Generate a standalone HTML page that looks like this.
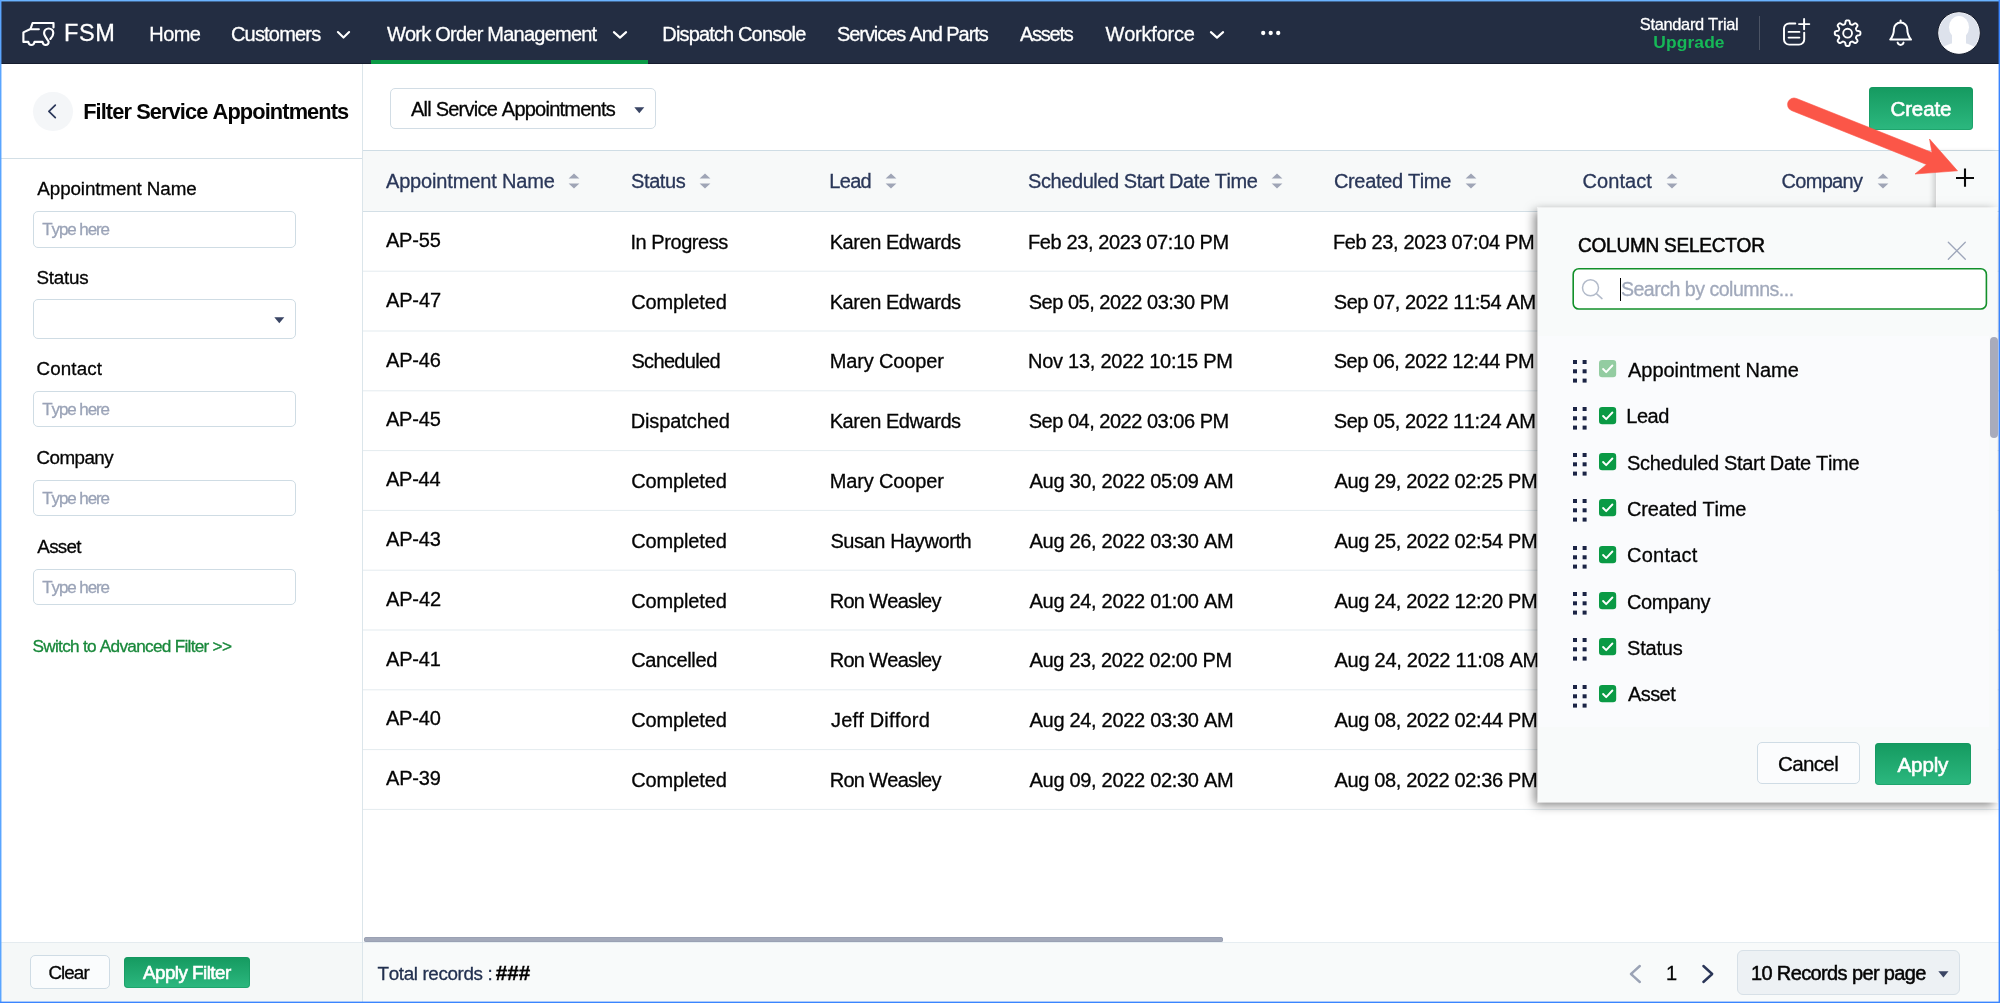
<!DOCTYPE html>
<html lang="en">
<head>
<meta charset="utf-8">
<title>FSM - Service Appointments</title>
<style>
html,body{margin:0;padding:0;overflow:hidden;}
body{width:2000px;height:1003px;overflow:hidden;position:relative;background:#fff;
  font-family:"Liberation Sans",sans-serif;font-kerning:none;-webkit-font-smoothing:antialiased;}
.abs{position:absolute;}
.tl{will-change:transform;}
.t{position:absolute;white-space:pre;line-height:1;font-kerning:none;}
svg{display:block;overflow:visible;}
/* top navigation */
#nav{position:absolute;left:0;top:0;width:2000px;height:64px;background:#232d42;box-shadow:inset 0 -1px 0 #161d2e;}
#nav .active{position:absolute;left:371px;top:59.5px;width:277px;height:4.5px;background:#0a9a45;}
#nav .sep{position:absolute;left:1759px;top:16px;width:1px;height:34px;background:#4b5364;}
/* sidebar */
#side{position:absolute;left:0;top:64px;width:362px;height:939px;background:#fff;border-right:1px solid #dbe5ea;}
#side .hline{position:absolute;left:0;top:94px;width:362px;height:1px;background:#d3dfe6;}
.back{position:absolute;left:33px;top:27.5px;width:39.5px;height:39.5px;border-radius:50%;background:#f4f6f8;}
.inp{position:absolute;left:33px;width:261px;border:1px solid #cfdce4;border-radius:5px;background:#fff;}
#side .foot{position:absolute;left:0;top:878px;width:362px;height:61px;background:#f5f8f8;border-top:1px solid #e4ebef;box-sizing:border-box;}
.btn-w{position:absolute;border:1px solid #cfdce5;border-radius:5px;background:#fafcfd;box-sizing:border-box;}
.btn-g{position:absolute;border-radius:4px;background:linear-gradient(#159a60,#2cb87f);box-shadow:inset 0 0 0 1px rgba(20,150,95,.55);box-sizing:border-box;}
/* main */
#main{position:absolute;left:363px;top:64px;width:1637px;height:939px;background:#fff;}
#thead{position:absolute;left:0;top:86px;width:1637px;height:62px;background:#f7f9f9;border-top:1px solid #cfdde5;border-bottom:1px solid #d3dfe6;box-sizing:border-box;}
#viewsel{position:absolute;left:390px;top:88px;width:265.5px;height:40.5px;border:1px solid #d2dde5;border-radius:5px;box-sizing:border-box;background:#fff;}
#pluscell{position:absolute;left:1937px;top:151px;width:63px;height:60px;background:#f8fafa;box-shadow:-1px 0 0 #fbfbfb,-5px 0 5px -1px rgba(0,0,0,.16);}
#hscroll{position:absolute;left:363.5px;top:937px;width:859.5px;height:5px;border-radius:2.5px;background:#a3a9ba;box-shadow:inset 0 0 0 .5px #9299ac;}
#mfoot{position:absolute;left:363px;top:942px;width:1637px;height:61px;background:#f8fafa;border-top:1px solid #e6edf1;box-sizing:border-box;}
#ppsel{position:absolute;left:1737px;top:950.4px;width:223px;height:44.4px;background:#edf1f4;border:1px solid #d7e0e7;border-radius:6px;box-sizing:border-box;}
/* column selector */
#panel{position:absolute;left:1538.4px;top:207.6px;width:458.6px;height:594.8px;background:#f8fafa;box-shadow:0 0 0 1px rgba(255,255,255,.55),-3px 3px 10px rgba(0,0,0,.5);}
#plist{position:absolute;left:1538.4px;top:336px;width:450.6px;height:391.4px;background:#fafbfd;}
#pscroll{position:absolute;left:1990px;top:337px;width:8px;height:101px;border-radius:4px;background:#a8abbb;}
/* frame */
.fr{position:absolute;z-index:50;}
</style>
</head>
<body>

<header id="nav">
  <div class="active"></div>
  <svg class="abs" style="left:0;top:0" width="2000" height="64" viewBox="0 0 2000 64" fill="none" stroke="#fff" stroke-linecap="round" stroke-linejoin="round">
    <!-- truck logo -->
    <g stroke-width="2.15">
      <path d="M53.5 27.4 V23 H32.6 L30.5 29 L23.4 32.4 V41.9 H28.3 C28.6 43.9 29.8 45 31.4 45 C33 45 34.2 43.9 34.5 41.9 H42.5 C42.8 43.9 44.1 45 45.7 45 C47.6 45 48.9 43.5 48.6 41.7 C48.3 40.2 44.1 36.6 44.1 33.1 A4.6 4.6 0 1 1 53.3 33.1 C53.3 35.4 51.9 37.5 50.4 38.9"/>
      <path d="M31 29.2 H38.8"/>
    </g>
    <!-- more dots -->
    <g fill="#fff" stroke="none"><circle cx="1263.2" cy="33" r="2.15"/><circle cx="1270.7" cy="33" r="2.15"/><circle cx="1278.2" cy="33" r="2.15"/></g>
    <!-- note + -->
    <g stroke-width="1.95" transform="translate(0 0.6)">
      <path d="M1795.3 22.8 H1789.2 A5.2 5.2 0 0 0 1784 28 V38.8 A5.2 5.2 0 0 0 1789.2 44 H1799 A5.2 5.2 0 0 0 1804.2 38.8 V32"/>
      <path d="M1788.6 31.3 H1799.4 M1788.6 37 H1799.4"/>
      <path d="M1799 23.5 H1809.3 M1804.1 18.4 V28.6"/>
    </g>
    <!-- gear -->
    <path d="M1847.60 20.35 L1848.10 20.37 L1848.60 20.45 L1849.09 20.65 L1849.50 21.19 L1849.77 22.31 L1849.94 23.44 L1850.19 24.00 L1850.51 24.25 L1850.84 24.42 L1851.18 24.56 L1851.52 24.70 L1851.87 24.82 L1852.27 24.86 L1852.85 24.64 L1853.77 23.97 L1854.75 23.36 L1855.43 23.27 L1855.91 23.47 L1856.32 23.77 L1856.69 24.11 L1857.03 24.48 L1857.33 24.89 L1857.53 25.37 L1857.44 26.05 L1856.83 27.03 L1856.16 27.95 L1855.94 28.53 L1855.98 28.93 L1856.10 29.28 L1856.24 29.62 L1856.38 29.96 L1856.55 30.29 L1856.80 30.61 L1857.36 30.86 L1858.49 31.03 L1859.61 31.30 L1860.15 31.71 L1860.35 32.20 L1860.43 32.70 L1860.45 33.20 L1860.43 33.70 L1860.35 34.20 L1860.15 34.69 L1859.61 35.10 L1858.49 35.37 L1857.36 35.54 L1856.80 35.79 L1856.55 36.11 L1856.38 36.44 L1856.24 36.78 L1856.10 37.12 L1855.98 37.47 L1855.94 37.87 L1856.16 38.45 L1856.83 39.37 L1857.44 40.35 L1857.53 41.03 L1857.33 41.51 L1857.03 41.92 L1856.69 42.29 L1856.32 42.63 L1855.91 42.93 L1855.43 43.13 L1854.75 43.04 L1853.77 42.43 L1852.85 41.76 L1852.27 41.54 L1851.87 41.58 L1851.52 41.70 L1851.18 41.84 L1850.84 41.98 L1850.51 42.15 L1850.19 42.40 L1849.94 42.96 L1849.77 44.09 L1849.50 45.21 L1849.09 45.75 L1848.60 45.95 L1848.10 46.03 L1847.60 46.05 L1847.10 46.03 L1846.60 45.95 L1846.11 45.75 L1845.70 45.21 L1845.43 44.09 L1845.26 42.96 L1845.01 42.40 L1844.69 42.15 L1844.36 41.98 L1844.02 41.84 L1843.68 41.70 L1843.33 41.58 L1842.93 41.54 L1842.35 41.76 L1841.43 42.43 L1840.45 43.04 L1839.77 43.13 L1839.29 42.93 L1838.88 42.63 L1838.51 42.29 L1838.17 41.92 L1837.87 41.51 L1837.67 41.03 L1837.76 40.35 L1838.37 39.37 L1839.04 38.45 L1839.26 37.87 L1839.22 37.47 L1839.10 37.12 L1838.96 36.78 L1838.82 36.44 L1838.65 36.11 L1838.40 35.79 L1837.84 35.54 L1836.71 35.37 L1835.59 35.10 L1835.05 34.69 L1834.85 34.20 L1834.77 33.70 L1834.75 33.20 L1834.77 32.70 L1834.85 32.20 L1835.05 31.71 L1835.59 31.30 L1836.71 31.03 L1837.84 30.86 L1838.40 30.61 L1838.65 30.29 L1838.82 29.96 L1838.96 29.62 L1839.10 29.28 L1839.22 28.93 L1839.26 28.53 L1839.04 27.95 L1838.37 27.03 L1837.76 26.05 L1837.67 25.37 L1837.87 24.89 L1838.17 24.48 L1838.51 24.11 L1838.88 23.77 L1839.29 23.47 L1839.77 23.27 L1840.45 23.36 L1841.43 23.97 L1842.35 24.64 L1842.93 24.86 L1843.33 24.82 L1843.68 24.70 L1844.02 24.56 L1844.36 24.42 L1844.69 24.25 L1845.01 24.00 L1845.26 23.44 L1845.43 22.31 L1845.70 21.19 L1846.11 20.65 L1846.60 20.45 L1847.10 20.37 Z" stroke-width="1.9"/>
    <circle cx="1847.6" cy="33.2" r="4.4" stroke-width="1.9"/>
    <!-- bell -->
    <g stroke-width="2">
      <path d="M1890.2 39.6 C1892.6 36.6 1893.9 34.2 1893.9 29.2 A6.7 6.7 0 0 1 1907.3 29.2 C1907.3 34.2 1908.6 36.6 1911 39.6 Z"/>
      <path d="M1900.6 20.4 V22.3"/>
      <path d="M1897.6 42.6 A3.1 3.1 0 0 0 1903.6 42.6"/>
    </g>
  </svg>
  <div class="sep"></div>
  <!-- avatar -->
  <svg class="abs" style="left:1937px;top:11px" width="44" height="44" viewBox="0 0 44 44">
    <defs><clipPath id="av"><circle cx="22" cy="22" r="20.2"/></clipPath></defs>
    <circle cx="22" cy="22" r="21.3" fill="#f4f5f8" stroke="#151c2c" stroke-width="1"/>
    <circle cx="22" cy="22" r="20.2" fill="#dde2ec"/>
    <g clip-path="url(#av)" fill="#fff">
      <ellipse cx="22" cy="16.3" rx="10" ry="11.4"/>
      <rect x="15" y="22" width="14" height="11"/>
      <ellipse cx="22" cy="47" rx="22" ry="15.5"/>
    </g>
  </svg>
</header>
<div class="abs tl" style="left:0;top:0;width:2000px;height:64px">
<span class="t" style="left:64.07px;top:21.71px;font-size:23.5px;letter-spacing:0.625px;color:#fff;-webkit-text-stroke:0.3px #fff;">FSM</span>
<span class="t" style="left:149.36px;top:23.67px;font-size:20px;letter-spacing:-0.607px;color:#fff;-webkit-text-stroke:0.3px #fff;">Home</span>
<span class="t" style="left:230.98px;top:23.67px;font-size:20px;letter-spacing:-0.806px;color:#fff;-webkit-text-stroke:0.3px #fff;">Customers</span>
<span class="t" style="left:386.91px;top:23.67px;font-size:20px;letter-spacing:-0.770px;color:#fff;-webkit-text-stroke:0.3px #fff;">Work Order Management</span>
<span class="t" style="left:662.36px;top:23.67px;font-size:20px;letter-spacing:-0.855px;color:#fff;-webkit-text-stroke:0.3px #fff;">Dispatch Console</span>
<span class="t" style="left:837.09px;top:23.67px;font-size:20px;letter-spacing:-1.085px;color:#fff;-webkit-text-stroke:0.3px #fff;">Services And Parts</span>
<span class="t" style="left:1019.96px;top:23.67px;font-size:20px;letter-spacing:-1.252px;color:#fff;-webkit-text-stroke:0.3px #fff;">Assets</span>
<span class="t" style="left:1105.51px;top:23.67px;font-size:20px;letter-spacing:-0.218px;color:#fff;-webkit-text-stroke:0.3px #fff;">Workforce</span>
<svg class="abs" style="left:336.0px;top:29px" width="15.0" height="12" viewBox="0 0 15.0 12"><path d="M1.9 3.1 L7.50 8.6 L13.10 3.1" fill="none" stroke="#fff" stroke-width="2.1" stroke-linecap="round" stroke-linejoin="round"/></svg>
<svg class="abs" style="left:612.0px;top:29px" width="16.0" height="12" viewBox="0 0 16.0 12"><path d="M1.9 3.1 L8.00 8.6 L14.10 3.1" fill="none" stroke="#fff" stroke-width="2.1" stroke-linecap="round" stroke-linejoin="round"/></svg>
<svg class="abs" style="left:1208.6px;top:29px" width="16.0" height="12" viewBox="0 0 16.0 12"><path d="M1.9 3.1 L8.00 8.6 L14.10 3.1" fill="none" stroke="#fff" stroke-width="2.1" stroke-linecap="round" stroke-linejoin="round"/></svg>
<span class="t" style="left:1639.86px;top:15.72px;font-size:16.4px;letter-spacing:-0.320px;color:#fff;-webkit-text-stroke:0.3px #fff;">Standard Trial</span>
<span class="t" style="left:1653.35px;top:33.87px;font-size:17.4px;letter-spacing:0.110px;color:#16b857;font-weight:700;">Upgrade</span>
</div>

<aside id="side">
  <div class="back"></div>
  <svg class="abs" style="left:46px;top:39px" width="13" height="17" viewBox="0 0 13 17"><path d="M9.3 2.1 L2.9 8.4 L9.3 14.7" fill="none" stroke="#2a3759" stroke-width="1.7" stroke-linecap="round" stroke-linejoin="round"/></svg>
  <div class="hline"></div>
  <div class="inp" style="top:147px;height:34.6px"></div>
  <div class="inp" style="top:235.4px;height:37.2px"></div>
  <svg class="abs" style="left:273.6px;top:253px" width="10.6" height="6.6" viewBox="0 0 10.6 6.6"><path d="M0.3 0.2 H10.3 L5.3 6.3 Z" fill="#3a4564"/></svg>
  <div class="inp" style="top:327.4px;height:34px"></div>
  <div class="inp" style="top:416.4px;height:34px"></div>
  <div class="inp" style="top:505px;height:34px"></div>
  <div class="foot"></div>
  <div class="btn-w" style="left:29.6px;top:891.4px;width:80px;height:34px"></div>
  <div class="btn-g" style="left:124.4px;top:892.6px;width:125.2px;height:31.4px"></div>
</aside>
<div class="abs tl" style="left:0;top:0;width:362px;height:1003px">
<span class="t" style="left:83.14px;top:100.55px;font-size:21.8px;letter-spacing:-0.899px;color:#050505;font-weight:700;">Filter Service Appointments</span>
<span class="t" style="left:37.36px;top:179.89px;font-size:18.8px;letter-spacing:-0.097px;color:#050505;-webkit-text-stroke:0.3px #050505;">Appointment Name</span>
<span class="t" style="left:36.55px;top:268.89px;font-size:18.8px;letter-spacing:-0.233px;color:#050505;-webkit-text-stroke:0.3px #050505;">Status</span>
<span class="t" style="left:36.45px;top:360.49px;font-size:18.8px;letter-spacing:0.150px;color:#050505;-webkit-text-stroke:0.3px #050505;">Contact</span>
<span class="t" style="left:36.45px;top:449.19px;font-size:18.8px;letter-spacing:-0.528px;color:#050505;-webkit-text-stroke:0.3px #050505;">Company</span>
<span class="t" style="left:37.36px;top:537.99px;font-size:18.8px;letter-spacing:-0.711px;color:#050505;-webkit-text-stroke:0.3px #050505;">Asset</span>
<span class="t" style="left:42.22px;top:220.81px;font-size:17px;letter-spacing:-1.088px;color:#9aa3b7;-webkit-text-stroke:0.3px #9aa3b7;">Type here</span>
<span class="t" style="left:42.22px;top:401.41px;font-size:17px;letter-spacing:-1.088px;color:#9aa3b7;-webkit-text-stroke:0.3px #9aa3b7;">Type here</span>
<span class="t" style="left:42.22px;top:490.41px;font-size:17px;letter-spacing:-1.088px;color:#9aa3b7;-webkit-text-stroke:0.3px #9aa3b7;">Type here</span>
<span class="t" style="left:42.22px;top:579.01px;font-size:17px;letter-spacing:-1.088px;color:#9aa3b7;-webkit-text-stroke:0.3px #9aa3b7;">Type here</span>
<span class="t" style="left:32.52px;top:638.04px;font-size:17.2px;letter-spacing:-0.715px;color:#18883a;-webkit-text-stroke:0.3px #18883a;">Switch to Advanced Filter &gt;&gt;</span>
<span class="t" style="left:48.45px;top:963.89px;font-size:18.8px;letter-spacing:-0.915px;color:#050505;-webkit-text-stroke:0.3px #050505;">Clear</span>
<span class="t" style="left:142.96px;top:963.89px;font-size:18.8px;letter-spacing:-0.516px;color:#fff;-webkit-text-stroke:0.6px #fff;">Apply Filter</span>
</div>

<main id="main">
  <div id="thead"></div>
</main>
<div id="viewsel"></div>
<svg class="abs" style="left:634px;top:106.6px" width="10.6" height="6.6" viewBox="0 0 10.6 6.6"><path d="M0.3 0.2 H10.3 L5.3 6.3 Z" fill="#3a4564"/></svg>
<div class="btn-g" style="left:1869px;top:87.4px;width:104.2px;height:42.2px"></div>
<svg class="abs" style="left:363px;top:0" width="1637" height="1003" viewBox="0 0 1637 1003" fill="#e4ebef"><rect x="0" y="270.70" width="1637" height="1"/><rect x="0" y="330.50" width="1637" height="1"/><rect x="0" y="390.30" width="1637" height="1"/><rect x="0" y="450.10" width="1637" height="1"/><rect x="0" y="509.90" width="1637" height="1"/><rect x="0" y="569.70" width="1637" height="1"/><rect x="0" y="629.50" width="1637" height="1"/><rect x="0" y="689.30" width="1637" height="1"/><rect x="0" y="749.10" width="1637" height="1"/><rect x="0" y="808.90" width="1637" height="1"/></svg>
<div id="pluscell"></div>
<svg class="abs" style="left:1955px;top:168px" width="20" height="20" viewBox="0 0 20 20"><path d="M1 10 H19 M10 0.6 V18.8" stroke="#0a0a0a" stroke-width="2.1" fill="none"/></svg>
<div id="hscroll"></div>
<div id="mfoot"></div>
<div id="ppsel"></div>
<svg class="abs" style="left:1937.6px;top:970.6px" width="10.8" height="6.8" viewBox="0 0 10.8 6.8"><path d="M0.3 0.2 H10.5 L5.4 6.5 Z" fill="#3a4564"/></svg>
<svg class="abs" style="left:1628px;top:963px" width="90" height="22" viewBox="0 0 90 22" fill="none" stroke-width="2.4" stroke-linecap="round" stroke-linejoin="round">
  <path d="M11.8 3 L3 11 L11.8 19" stroke="#9ba3b5"/>
  <path d="M75.4 3 L84.2 11 L75.4 19" stroke="#2a3557"/>
</svg>
<div class="abs tl" style="left:0;top:0;width:2000px;height:1003px">
<span class="t" style="left:410.96px;top:98.87px;font-size:20px;letter-spacing:-0.764px;color:#050505;-webkit-text-stroke:0.3px #050505;">All Service Appointments</span>
<span class="t" style="left:1890.46px;top:99.15px;font-size:20.5px;letter-spacing:-0.116px;color:#fff;-webkit-text-stroke:0.6px #fff;">Create</span>
<span class="t" style="left:385.96px;top:171.07px;font-size:20px;letter-spacing:-0.152px;color:#2a3759;-webkit-text-stroke:0.3px #2a3759;">Appointment Name</span>
<svg class="abs" style="left:568.0px;top:173px" width="12" height="16" viewBox="0 0 12 16"><path d="M6 0.6 L11.4 5.6 H0.6 Z M6 15.4 L11.4 10.4 H0.6 Z" fill="#9fa5b6"/></svg>
<span class="t" style="left:631.09px;top:171.07px;font-size:20px;letter-spacing:-0.414px;color:#2a3759;-webkit-text-stroke:0.3px #2a3759;">Status</span>
<svg class="abs" style="left:699.1px;top:173px" width="12" height="16" viewBox="0 0 12 16"><path d="M6 0.6 L11.4 5.6 H0.6 Z M6 15.4 L11.4 10.4 H0.6 Z" fill="#9fa5b6"/></svg>
<span class="t" style="left:829.36px;top:171.07px;font-size:20px;letter-spacing:-0.721px;color:#2a3759;-webkit-text-stroke:0.3px #2a3759;">Lead</span>
<svg class="abs" style="left:884.5px;top:173px" width="12" height="16" viewBox="0 0 12 16"><path d="M6 0.6 L11.4 5.6 H0.6 Z M6 15.4 L11.4 10.4 H0.6 Z" fill="#9fa5b6"/></svg>
<span class="t" style="left:1028.09px;top:171.07px;font-size:20px;letter-spacing:-0.430px;color:#2a3759;-webkit-text-stroke:0.3px #2a3759;">Scheduled Start Date Time</span>
<svg class="abs" style="left:1270.7px;top:173px" width="12" height="16" viewBox="0 0 12 16"><path d="M6 0.6 L11.4 5.6 H0.6 Z M6 15.4 L11.4 10.4 H0.6 Z" fill="#9fa5b6"/></svg>
<span class="t" style="left:1333.98px;top:171.07px;font-size:20px;letter-spacing:-0.350px;color:#2a3759;-webkit-text-stroke:0.3px #2a3759;">Created Time</span>
<svg class="abs" style="left:1464.7px;top:173px" width="12" height="16" viewBox="0 0 12 16"><path d="M6 0.6 L11.4 5.6 H0.6 Z M6 15.4 L11.4 10.4 H0.6 Z" fill="#9fa5b6"/></svg>
<span class="t" style="left:1582.58px;top:171.07px;font-size:20px;letter-spacing:0.039px;color:#2a3759;-webkit-text-stroke:0.3px #2a3759;">Contact</span>
<svg class="abs" style="left:1665.5px;top:173px" width="12" height="16" viewBox="0 0 12 16"><path d="M6 0.6 L11.4 5.6 H0.6 Z M6 15.4 L11.4 10.4 H0.6 Z" fill="#9fa5b6"/></svg>
<span class="t" style="left:1781.38px;top:171.07px;font-size:20px;letter-spacing:-0.657px;color:#2a3759;-webkit-text-stroke:0.3px #2a3759;">Company</span>
<svg class="abs" style="left:1877.0px;top:173px" width="12" height="16" viewBox="0 0 12 16"><path d="M6 0.6 L11.4 5.6 H0.6 Z M6 15.4 L11.4 10.4 H0.6 Z" fill="#9fa5b6"/></svg>
<span class="t" style="left:385.96px;top:229.97px;font-size:20px;letter-spacing:-0.177px;color:#050505;-webkit-text-stroke:0.3px #050505;">AP-55</span>
<span class="t" style="left:630.45px;top:231.77px;font-size:20px;letter-spacing:-0.440px;color:#050505;-webkit-text-stroke:0.3px #050505;">In Progress</span>
<span class="t" style="left:829.66px;top:231.77px;font-size:20px;letter-spacing:-0.440px;color:#050505;-webkit-text-stroke:0.3px #050505;">Karen Edwards</span>
<span class="t" style="left:1027.96px;top:231.77px;font-size:20px;letter-spacing:-0.388px;color:#050505;-webkit-text-stroke:0.3px #050505;">Feb 23, 2023 07:10 PM</span>
<span class="t" style="left:1332.96px;top:231.77px;font-size:20px;letter-spacing:-0.368px;color:#050505;-webkit-text-stroke:0.3px #050505;">Feb 23, 2023 07:04 PM</span>
<span class="t" style="left:385.96px;top:289.77px;font-size:20px;letter-spacing:-0.135px;color:#050505;-webkit-text-stroke:0.3px #050505;">AP-47</span>
<span class="t" style="left:631.28px;top:291.57px;font-size:20px;letter-spacing:-0.139px;color:#050505;-webkit-text-stroke:0.3px #050505;">Completed</span>
<span class="t" style="left:829.66px;top:291.57px;font-size:20px;letter-spacing:-0.440px;color:#050505;-webkit-text-stroke:0.3px #050505;">Karen Edwards</span>
<span class="t" style="left:1028.69px;top:291.57px;font-size:20px;letter-spacing:-0.480px;color:#050505;-webkit-text-stroke:0.3px #050505;">Sep 05, 2022 03:30 PM</span>
<span class="t" style="left:1333.69px;top:291.57px;font-size:20px;letter-spacing:-0.390px;color:#050505;-webkit-text-stroke:0.3px #050505;">Sep 07, 2022 11:54 AM</span>
<span class="t" style="left:385.96px;top:349.57px;font-size:20px;letter-spacing:-0.167px;color:#050505;-webkit-text-stroke:0.3px #050505;">AP-46</span>
<span class="t" style="left:631.39px;top:351.37px;font-size:20px;letter-spacing:-0.653px;color:#050505;-webkit-text-stroke:0.3px #050505;">Scheduled</span>
<span class="t" style="left:829.66px;top:351.37px;font-size:20px;letter-spacing:-0.132px;color:#050505;-webkit-text-stroke:0.3px #050505;">Mary Cooper</span>
<span class="t" style="left:1027.96px;top:351.37px;font-size:20px;letter-spacing:-0.253px;color:#050505;-webkit-text-stroke:0.3px #050505;">Nov 13, 2022 10:15 PM</span>
<span class="t" style="left:1333.69px;top:351.37px;font-size:20px;letter-spacing:-0.460px;color:#050505;-webkit-text-stroke:0.3px #050505;">Sep 06, 2022 12:44 PM</span>
<span class="t" style="left:385.96px;top:409.37px;font-size:20px;letter-spacing:-0.177px;color:#050505;-webkit-text-stroke:0.3px #050505;">AP-45</span>
<span class="t" style="left:630.66px;top:411.17px;font-size:20px;letter-spacing:-0.092px;color:#050505;-webkit-text-stroke:0.3px #050505;">Dispatched</span>
<span class="t" style="left:829.66px;top:411.17px;font-size:20px;letter-spacing:-0.440px;color:#050505;-webkit-text-stroke:0.3px #050505;">Karen Edwards</span>
<span class="t" style="left:1028.69px;top:411.17px;font-size:20px;letter-spacing:-0.485px;color:#050505;-webkit-text-stroke:0.3px #050505;">Sep 04, 2022 03:06 PM</span>
<span class="t" style="left:1333.69px;top:411.17px;font-size:20px;letter-spacing:-0.395px;color:#050505;-webkit-text-stroke:0.3px #050505;">Sep 05, 2022 11:24 AM</span>
<span class="t" style="left:385.96px;top:469.17px;font-size:20px;letter-spacing:-0.240px;color:#050505;-webkit-text-stroke:0.3px #050505;">AP-44</span>
<span class="t" style="left:631.28px;top:470.97px;font-size:20px;letter-spacing:-0.139px;color:#050505;-webkit-text-stroke:0.3px #050505;">Completed</span>
<span class="t" style="left:829.66px;top:470.97px;font-size:20px;letter-spacing:-0.132px;color:#050505;-webkit-text-stroke:0.3px #050505;">Mary Cooper</span>
<span class="t" style="left:1029.56px;top:470.97px;font-size:20px;letter-spacing:-0.304px;color:#050505;-webkit-text-stroke:0.3px #050505;">Aug 30, 2022 05:09 AM</span>
<span class="t" style="left:1334.56px;top:470.97px;font-size:20px;letter-spacing:-0.354px;color:#050505;-webkit-text-stroke:0.3px #050505;">Aug 29, 2022 02:25 PM</span>
<span class="t" style="left:385.96px;top:528.97px;font-size:20px;letter-spacing:-0.167px;color:#050505;-webkit-text-stroke:0.3px #050505;">AP-43</span>
<span class="t" style="left:631.28px;top:530.77px;font-size:20px;letter-spacing:-0.139px;color:#050505;-webkit-text-stroke:0.3px #050505;">Completed</span>
<span class="t" style="left:830.39px;top:530.77px;font-size:20px;letter-spacing:-0.418px;color:#050505;-webkit-text-stroke:0.3px #050505;">Susan Hayworth</span>
<span class="t" style="left:1029.56px;top:530.77px;font-size:20px;letter-spacing:-0.304px;color:#050505;-webkit-text-stroke:0.3px #050505;">Aug 26, 2022 03:30 AM</span>
<span class="t" style="left:1334.56px;top:530.77px;font-size:20px;letter-spacing:-0.354px;color:#050505;-webkit-text-stroke:0.3px #050505;">Aug 25, 2022 02:54 PM</span>
<span class="t" style="left:385.96px;top:588.77px;font-size:20px;letter-spacing:-0.135px;color:#050505;-webkit-text-stroke:0.3px #050505;">AP-42</span>
<span class="t" style="left:631.28px;top:590.57px;font-size:20px;letter-spacing:-0.139px;color:#050505;-webkit-text-stroke:0.3px #050505;">Completed</span>
<span class="t" style="left:829.66px;top:590.57px;font-size:20px;letter-spacing:-0.706px;color:#050505;-webkit-text-stroke:0.3px #050505;">Ron Weasley</span>
<span class="t" style="left:1029.56px;top:590.57px;font-size:20px;letter-spacing:-0.304px;color:#050505;-webkit-text-stroke:0.3px #050505;">Aug 24, 2022 01:00 AM</span>
<span class="t" style="left:1334.56px;top:590.57px;font-size:20px;letter-spacing:-0.354px;color:#050505;-webkit-text-stroke:0.3px #050505;">Aug 24, 2022 12:20 PM</span>
<span class="t" style="left:385.96px;top:648.57px;font-size:20px;letter-spacing:-0.143px;color:#050505;-webkit-text-stroke:0.3px #050505;">AP-41</span>
<span class="t" style="left:631.28px;top:650.37px;font-size:20px;letter-spacing:-0.368px;color:#050505;-webkit-text-stroke:0.3px #050505;">Cancelled</span>
<span class="t" style="left:829.66px;top:650.37px;font-size:20px;letter-spacing:-0.706px;color:#050505;-webkit-text-stroke:0.3px #050505;">Ron Weasley</span>
<span class="t" style="left:1029.56px;top:650.37px;font-size:20px;letter-spacing:-0.379px;color:#050505;-webkit-text-stroke:0.3px #050505;">Aug 23, 2022 02:00 PM</span>
<span class="t" style="left:1334.56px;top:650.37px;font-size:20px;letter-spacing:-0.279px;color:#050505;-webkit-text-stroke:0.3px #050505;">Aug 24, 2022 11:08 AM</span>
<span class="t" style="left:385.96px;top:708.37px;font-size:20px;letter-spacing:-0.191px;color:#050505;-webkit-text-stroke:0.3px #050505;">AP-40</span>
<span class="t" style="left:631.28px;top:710.17px;font-size:20px;letter-spacing:-0.139px;color:#050505;-webkit-text-stroke:0.3px #050505;">Completed</span>
<span class="t" style="left:830.99px;top:710.17px;font-size:20px;letter-spacing:0.191px;color:#050505;-webkit-text-stroke:0.3px #050505;">Jeff Difford</span>
<span class="t" style="left:1029.56px;top:710.17px;font-size:20px;letter-spacing:-0.304px;color:#050505;-webkit-text-stroke:0.3px #050505;">Aug 24, 2022 03:30 AM</span>
<span class="t" style="left:1334.56px;top:710.17px;font-size:20px;letter-spacing:-0.354px;color:#050505;-webkit-text-stroke:0.3px #050505;">Aug 08, 2022 02:44 PM</span>
<span class="t" style="left:385.96px;top:768.17px;font-size:20px;letter-spacing:-0.150px;color:#050505;-webkit-text-stroke:0.3px #050505;">AP-39</span>
<span class="t" style="left:631.28px;top:769.97px;font-size:20px;letter-spacing:-0.139px;color:#050505;-webkit-text-stroke:0.3px #050505;">Completed</span>
<span class="t" style="left:829.66px;top:769.97px;font-size:20px;letter-spacing:-0.706px;color:#050505;-webkit-text-stroke:0.3px #050505;">Ron Weasley</span>
<span class="t" style="left:1029.56px;top:769.97px;font-size:20px;letter-spacing:-0.304px;color:#050505;-webkit-text-stroke:0.3px #050505;">Aug 09, 2022 02:30 AM</span>
<span class="t" style="left:1334.56px;top:769.97px;font-size:20px;letter-spacing:-0.354px;color:#050505;-webkit-text-stroke:0.3px #050505;">Aug 08, 2022 02:36 PM</span>
<span class="t" style="left:377.58px;top:964.89px;font-size:18.8px;letter-spacing:-0.358px;color:#22304f;-webkit-text-stroke:0.3px #22304f;">Total records :</span>
<span class="t" style="left:495.65px;top:963.16px;font-size:20.6px;letter-spacing:0.157px;color:#000;font-weight:700;-webkit-text-stroke:0.4px #000;">###</span>
<span class="t" style="left:1666.08px;top:962.67px;font-size:20px;letter-spacing:0.000px;color:#050505;-webkit-text-stroke:0.3px #050505;">1</span>
<span class="t" style="left:1750.88px;top:962.67px;font-size:20px;letter-spacing:-0.621px;color:#050505;-webkit-text-stroke:0.5px #050505;">10 Records per page</span>
</div>

<section id="panel"></section>
<div id="plist"></div>
<svg class="abs" style="left:1571px;top:267px" width="418" height="44" viewBox="0 0 418 44"><rect x="2.2" y="1.8" width="413.2" height="40.2" rx="5.6" fill="#fff" stroke="#12902a" stroke-width="1.6"/></svg>
<div id="pscroll"></div>
<svg class="abs" style="left:1580px;top:278px" width="26" height="24" viewBox="0 0 26 24" fill="none" stroke="#b3bbca" stroke-width="1.5" stroke-linecap="round"><circle cx="10.5" cy="9.8" r="8"/><path d="M16.4 15.6 L22 20.6"/></svg>
<div class="abs" style="left:1620px;top:278px;width:1px;height:23px;background:#000"></div>
<svg class="abs" style="left:1947px;top:241px" width="20" height="20" viewBox="0 0 20 20"><path d="M1.3 1.3 L18.3 18.3 M18.3 1.3 L1.3 18.3" stroke="#9ea6ba" stroke-width="1.3" fill="none" stroke-linecap="round"/></svg>
<div class="btn-w" style="left:1756.6px;top:742.4px;width:103.4px;height:41.6px;background:#fbfcfd"></div>
<div class="btn-g" style="left:1875px;top:743.4px;width:96px;height:42px"></div>
<div class="abs tl" style="left:0;top:0;width:2000px;height:1003px">
<span class="t" style="left:1578.04px;top:234.67px;font-size:20px;letter-spacing:-0.239px;color:#050505;-webkit-text-stroke:0.55px #050505;transform:scaleX(0.95);transform-origin:0 0;">COLUMN SELECTOR</span>
<span class="t" style="left:1620.91px;top:279.81px;font-size:19.6px;letter-spacing:-0.512px;color:#a1a9bb;-webkit-text-stroke:0.3px #a1a9bb;">Search by columns...</span>
<span class="t" style="left:1627.96px;top:360.07px;font-size:20px;letter-spacing:-0.018px;color:#050505;-webkit-text-stroke:0.3px #050505;">Appointment Name</span>
<svg class="abs" style="left:1573.4px;top:360.40px" width="14" height="23" viewBox="0 0 14 23" fill="#1b2445"><rect x="0" y="0" width="4" height="4"/><rect x="0" y="9.3" width="4" height="4"/><rect x="0" y="18.6" width="4" height="4"/><rect x="9.6" y="0" width="4" height="4"/><rect x="9.6" y="9.3" width="4" height="4"/><rect x="9.6" y="18.6" width="4" height="4"/></svg>
<svg class="abs" style="left:1599.3px;top:360.40px" width="17.2" height="17.2" viewBox="0 0 17.2 17.2"><rect width="17.2" height="17.2" rx="3.2" fill="#93cca1"/><path d="M4.1 9 L7.2 12.2 L13.4 5.5" fill="none" stroke="#fff" stroke-width="1.9" stroke-linecap="round" stroke-linejoin="round"/></svg>
<span class="t" style="left:1626.36px;top:406.37px;font-size:20px;letter-spacing:-0.521px;color:#050505;-webkit-text-stroke:0.3px #050505;">Lead</span>
<svg class="abs" style="left:1573.4px;top:406.70px" width="14" height="23" viewBox="0 0 14 23" fill="#1b2445"><rect x="0" y="0" width="4" height="4"/><rect x="0" y="9.3" width="4" height="4"/><rect x="0" y="18.6" width="4" height="4"/><rect x="9.6" y="0" width="4" height="4"/><rect x="9.6" y="9.3" width="4" height="4"/><rect x="9.6" y="18.6" width="4" height="4"/></svg>
<svg class="abs" style="left:1599.3px;top:406.70px" width="17.2" height="17.2" viewBox="0 0 17.2 17.2"><rect width="17.2" height="17.2" rx="3.2" fill="#0a9a45"/><path d="M4.1 9 L7.2 12.2 L13.4 5.5" fill="none" stroke="#fff" stroke-width="1.9" stroke-linecap="round" stroke-linejoin="round"/></svg>
<span class="t" style="left:1627.09px;top:452.67px;font-size:20px;letter-spacing:-0.318px;color:#050505;-webkit-text-stroke:0.3px #050505;">Scheduled Start Date Time</span>
<svg class="abs" style="left:1573.4px;top:453.00px" width="14" height="23" viewBox="0 0 14 23" fill="#1b2445"><rect x="0" y="0" width="4" height="4"/><rect x="0" y="9.3" width="4" height="4"/><rect x="0" y="18.6" width="4" height="4"/><rect x="9.6" y="0" width="4" height="4"/><rect x="9.6" y="9.3" width="4" height="4"/><rect x="9.6" y="18.6" width="4" height="4"/></svg>
<svg class="abs" style="left:1599.3px;top:453.00px" width="17.2" height="17.2" viewBox="0 0 17.2 17.2"><rect width="17.2" height="17.2" rx="3.2" fill="#0a9a45"/><path d="M4.1 9 L7.2 12.2 L13.4 5.5" fill="none" stroke="#fff" stroke-width="1.9" stroke-linecap="round" stroke-linejoin="round"/></svg>
<span class="t" style="left:1626.98px;top:498.97px;font-size:20px;letter-spacing:-0.150px;color:#050505;-webkit-text-stroke:0.3px #050505;">Created Time</span>
<svg class="abs" style="left:1573.4px;top:499.30px" width="14" height="23" viewBox="0 0 14 23" fill="#1b2445"><rect x="0" y="0" width="4" height="4"/><rect x="0" y="9.3" width="4" height="4"/><rect x="0" y="18.6" width="4" height="4"/><rect x="9.6" y="0" width="4" height="4"/><rect x="9.6" y="9.3" width="4" height="4"/><rect x="9.6" y="18.6" width="4" height="4"/></svg>
<svg class="abs" style="left:1599.3px;top:499.30px" width="17.2" height="17.2" viewBox="0 0 17.2 17.2"><rect width="17.2" height="17.2" rx="3.2" fill="#0a9a45"/><path d="M4.1 9 L7.2 12.2 L13.4 5.5" fill="none" stroke="#fff" stroke-width="1.9" stroke-linecap="round" stroke-linejoin="round"/></svg>
<span class="t" style="left:1626.98px;top:545.27px;font-size:20px;letter-spacing:0.239px;color:#050505;-webkit-text-stroke:0.3px #050505;">Contact</span>
<svg class="abs" style="left:1573.4px;top:545.60px" width="14" height="23" viewBox="0 0 14 23" fill="#1b2445"><rect x="0" y="0" width="4" height="4"/><rect x="0" y="9.3" width="4" height="4"/><rect x="0" y="18.6" width="4" height="4"/><rect x="9.6" y="0" width="4" height="4"/><rect x="9.6" y="9.3" width="4" height="4"/><rect x="9.6" y="18.6" width="4" height="4"/></svg>
<svg class="abs" style="left:1599.3px;top:545.60px" width="17.2" height="17.2" viewBox="0 0 17.2 17.2"><rect width="17.2" height="17.2" rx="3.2" fill="#0a9a45"/><path d="M4.1 9 L7.2 12.2 L13.4 5.5" fill="none" stroke="#fff" stroke-width="1.9" stroke-linecap="round" stroke-linejoin="round"/></svg>
<span class="t" style="left:1626.98px;top:591.57px;font-size:20px;letter-spacing:-0.357px;color:#050505;-webkit-text-stroke:0.3px #050505;">Company</span>
<svg class="abs" style="left:1573.4px;top:591.90px" width="14" height="23" viewBox="0 0 14 23" fill="#1b2445"><rect x="0" y="0" width="4" height="4"/><rect x="0" y="9.3" width="4" height="4"/><rect x="0" y="18.6" width="4" height="4"/><rect x="9.6" y="0" width="4" height="4"/><rect x="9.6" y="9.3" width="4" height="4"/><rect x="9.6" y="18.6" width="4" height="4"/></svg>
<svg class="abs" style="left:1599.3px;top:591.90px" width="17.2" height="17.2" viewBox="0 0 17.2 17.2"><rect width="17.2" height="17.2" rx="3.2" fill="#0a9a45"/><path d="M4.1 9 L7.2 12.2 L13.4 5.5" fill="none" stroke="#fff" stroke-width="1.9" stroke-linecap="round" stroke-linejoin="round"/></svg>
<span class="t" style="left:1627.09px;top:637.87px;font-size:20px;letter-spacing:-0.214px;color:#050505;-webkit-text-stroke:0.3px #050505;">Status</span>
<svg class="abs" style="left:1573.4px;top:638.20px" width="14" height="23" viewBox="0 0 14 23" fill="#1b2445"><rect x="0" y="0" width="4" height="4"/><rect x="0" y="9.3" width="4" height="4"/><rect x="0" y="18.6" width="4" height="4"/><rect x="9.6" y="0" width="4" height="4"/><rect x="9.6" y="9.3" width="4" height="4"/><rect x="9.6" y="18.6" width="4" height="4"/></svg>
<svg class="abs" style="left:1599.3px;top:638.20px" width="17.2" height="17.2" viewBox="0 0 17.2 17.2"><rect width="17.2" height="17.2" rx="3.2" fill="#0a9a45"/><path d="M4.1 9 L7.2 12.2 L13.4 5.5" fill="none" stroke="#fff" stroke-width="1.9" stroke-linecap="round" stroke-linejoin="round"/></svg>
<span class="t" style="left:1627.96px;top:684.17px;font-size:20px;letter-spacing:-0.558px;color:#050505;-webkit-text-stroke:0.3px #050505;">Asset</span>
<svg class="abs" style="left:1573.4px;top:684.50px" width="14" height="23" viewBox="0 0 14 23" fill="#1b2445"><rect x="0" y="0" width="4" height="4"/><rect x="0" y="9.3" width="4" height="4"/><rect x="0" y="18.6" width="4" height="4"/><rect x="9.6" y="0" width="4" height="4"/><rect x="9.6" y="9.3" width="4" height="4"/><rect x="9.6" y="18.6" width="4" height="4"/></svg>
<svg class="abs" style="left:1599.3px;top:684.50px" width="17.2" height="17.2" viewBox="0 0 17.2 17.2"><rect width="17.2" height="17.2" rx="3.2" fill="#0a9a45"/><path d="M4.1 9 L7.2 12.2 L13.4 5.5" fill="none" stroke="#fff" stroke-width="1.9" stroke-linecap="round" stroke-linejoin="round"/></svg>
<span class="t" style="left:1777.95px;top:753.56px;font-size:20.6px;letter-spacing:-0.660px;color:#050505;-webkit-text-stroke:0.3px #050505;">Cancel</span>
<span class="t" style="left:1897.56px;top:754.56px;font-size:20.6px;letter-spacing:-0.162px;color:#fff;-webkit-text-stroke:0.6px #fff;">Apply</span>
</div>

<!-- annotation arrow -->
<svg class="abs" style="left:0;top:0;z-index:20" width="2000" height="1003" viewBox="0 0 2000 1003">
  <path d="M1796.5 98.5 L1932 152.5 L1929.5 139 L1957.5 170.8 L1915 174 L1926.5 164.5 L1791.5 110.5 A6.5 6.5 0 0 1 1796.5 98.5 Z" fill="#fb5648" stroke="#fb5648" stroke-width="0.6" stroke-linejoin="round"/>
</svg>

<!-- window frame -->
<div class="fr" style="left:0;top:0;width:2000px;height:2px;background:linear-gradient(#6ab3ff 0,#6ab3ff 50%,rgba(106,179,255,.45) 50%,rgba(106,179,255,.45) 100%)"></div>
<div class="fr" style="left:0;top:0;width:2px;height:1003px;background:linear-gradient(90deg,#5aa5ff 0,#5aa5ff 50%,rgba(90,165,255,.45) 50%,rgba(90,165,255,.45) 100%)"></div>
<div class="fr" style="left:1998px;top:0;width:2px;height:1003px;background:linear-gradient(90deg,rgba(58,133,255,.4) 0,rgba(58,133,255,.4) 50%,#3a85ff 50%,#3a85ff 100%)"></div>
<div class="fr" style="left:0;top:1001px;width:2000px;height:2px;background:linear-gradient(rgba(58,133,255,.4) 0,rgba(58,133,255,.4) 50%,#3a85ff 50%,#3a85ff 100%)"></div>
</body>
</html>
